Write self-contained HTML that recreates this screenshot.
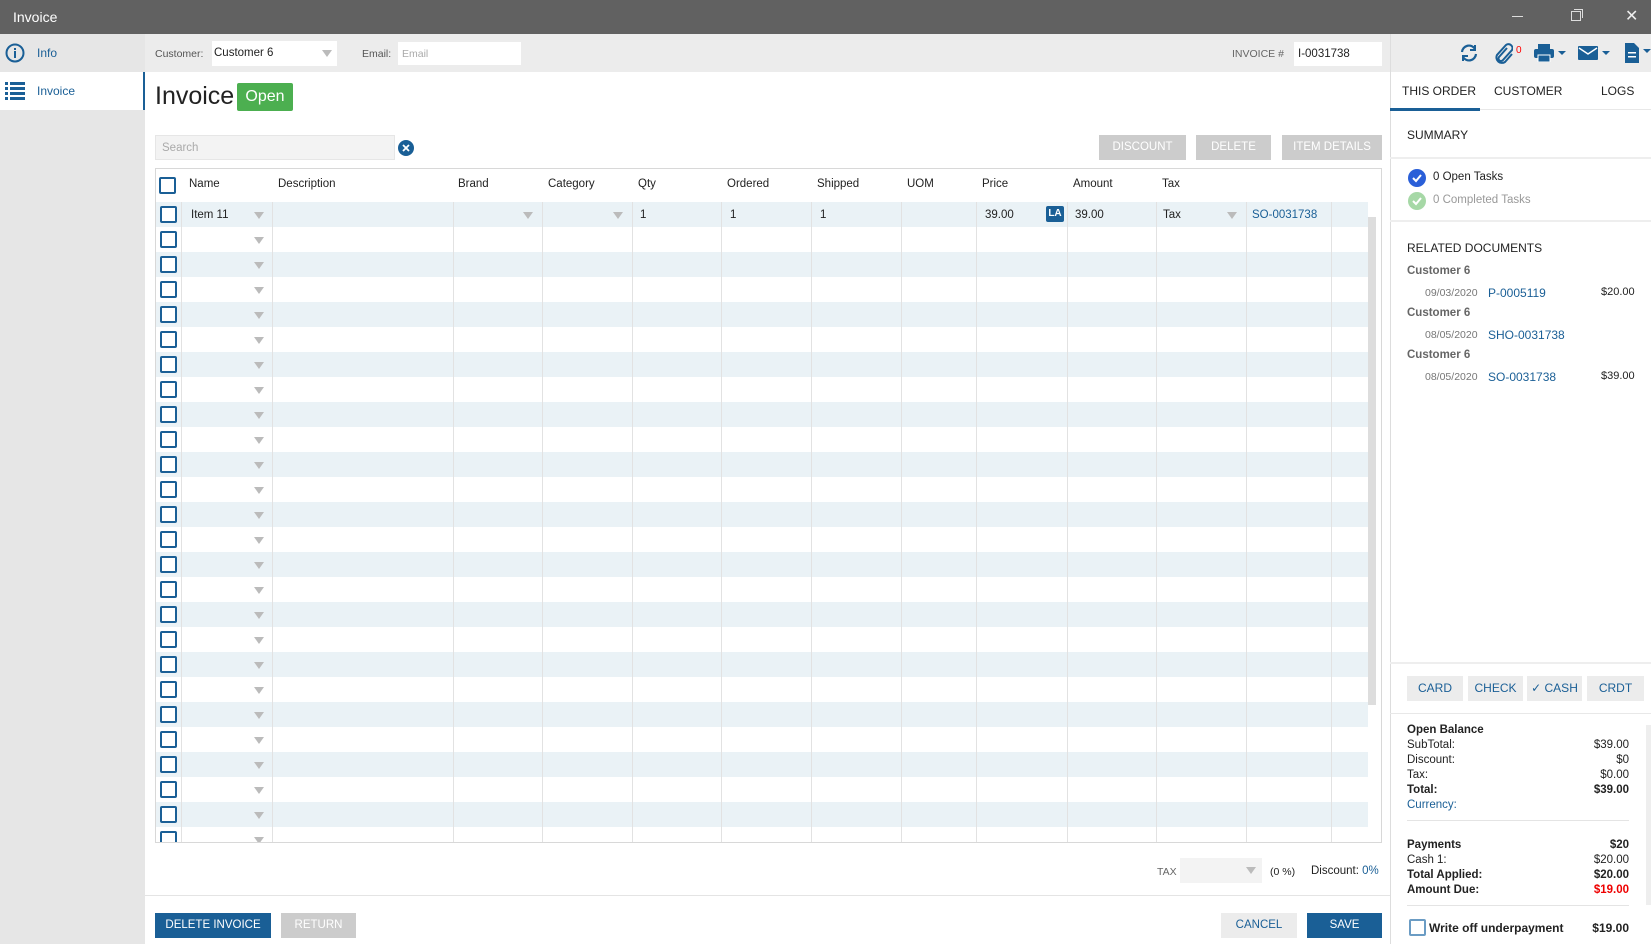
<!DOCTYPE html>
<html><head><meta charset="utf-8"><style>
*{box-sizing:border-box;margin:0;padding:0}
body{width:1651px;height:944px;overflow:hidden;font-family:"Liberation Sans",sans-serif;font-size:11.5px;color:#222;background:#fff;position:relative}
.a{position:absolute}
.blue{color:#1a5f96}
.cb{position:absolute;width:17px;height:17px;border:2px solid #1a5f96;border-radius:2px;background:#fff}
.arr{position:absolute;width:0;height:0;border-left:5px solid transparent;border-right:5px solid transparent;border-top:7px solid #bbb}
.gbtn{position:absolute;background:#ccc;color:#fff;font-size:11.5px;text-align:center;line-height:25px}
.pbtn{position:absolute;top:676px;height:25px;background:#ececec;color:#1a5f96;text-align:center;line-height:25px;font-size:12px}
.r{position:absolute;left:1407px;width:222px;font-size:11.5px;line-height:15px}
.r span{float:right}
</style></head><body>
<div class="a" style="left:0;top:0;width:1651px;height:34px;background:#616161"></div>
<div class="a" style="left:13px;top:9px;color:#fff;font-size:14px">Invoice</div>
<div class="a" style="left:1512px;top:16px;width:11px;height:1px;background:#ddd"></div>
<div class="a" style="left:1571px;top:11px;width:10px;height:10px;border:1px solid #ddd"></div>
<div class="a" style="left:1574px;top:9px;width:9px;height:9px;border-top:1px solid #ddd;border-right:1px solid #ddd"></div>
<div class="a" style="left:1625px;top:6px;color:#eee;font-size:16px">✕</div>
<div class="a" style="left:0;top:34px;width:1651px;height:38px;background:#ececec"></div>
<div class="a" style="left:0;top:34px;width:145px;height:910px;background:#e6e6e6"></div>
<div class="a" style="left:0;top:72px;width:145px;height:38px;background:#fff;border-right:2px solid #1a5f96"></div>
<svg class="a" style="left:5px;top:43px" width="20" height="20"><circle cx="10" cy="10" r="8.5" fill="none" stroke="#1a5f96" stroke-width="2"/><rect x="9" y="8" width="2" height="7" fill="#1a5f96"/><rect x="9" y="5" width="2" height="2" fill="#1a5f96"/></svg>
<div class="a blue" style="left:37px;top:46px;font-size:12px">Info</div>
<svg class="a" style="left:5px;top:82px" width="20" height="18" fill="#1a5f96"><rect x="0" y="0" width="3" height="3"/><rect x="5" y="0" width="15" height="3"/><rect x="0" y="5" width="3" height="3"/><rect x="5" y="5" width="15" height="3"/><rect x="0" y="10" width="3" height="3"/><rect x="5" y="10" width="15" height="3"/><rect x="0" y="15" width="3" height="3"/><rect x="5" y="15" width="15" height="3"/></svg>
<div class="a blue" style="left:37px;top:84px;font-size:12px">Invoice</div>
<div class="a" style="left:155px;top:48px;color:#555;font-size:10.5px">Customer:</div>
<div class="a" style="left:212px;top:41px;width:125px;height:25px;background:#fff;padding:6px 2px;font-size:11.5px">Customer 6</div>
<div class="arr" style="left:322px;top:50px"></div>
<div class="a" style="left:362px;top:48px;color:#555;font-size:10.5px">Email:</div>
<div class="a" style="left:398px;top:42px;width:123px;height:23px;background:#fff;padding:6px 4px;color:#aaa;font-size:10.5px">Email</div>
<div class="a" style="left:1232px;top:48px;color:#666;font-size:10.5px">INVOICE #</div>
<div class="a" style="left:1294px;top:42px;width:88px;height:24px;background:#fff;padding:6px 4px;font-size:11.5px">I-0031738</div>
<div class="a" style="left:1390px;top:34px;width:1px;height:910px;background:#ddd"></div>
<svg class="a" style="left:1458px;top:43px" width="22" height="20" fill="none" stroke="#1a5f96" stroke-width="2.2"><path d="M4 9a7 7 0 0 1 13-3M18 11a7 7 0 0 1-13 3"/><path d="M17 2v5h-5M5 18v-5h5" stroke-width="2"/></svg>
<svg class="a" style="left:1493px;top:42px" width="20" height="22" fill="none" stroke="#1a5f96" stroke-width="2"><path d="M14 6l-8 9a2.5 2.5 0 0 0 4 3l9-10a4 4 0 0 0-6-5l-9 10a5.5 5.5 0 0 0 8 7l7-8"/></svg>
<div class="a" style="left:1516px;top:45px;color:red;font-size:10px">0</div>
<svg class="a" style="left:1534px;top:44px" width="34" height="18" fill="#1a5f96"><rect x="4" y="0" width="12" height="5"/><rect x="0" y="5" width="20" height="9" rx="2"/><rect x="4" y="11" width="12" height="7" fill="#1a5f96" stroke="#fff" stroke-width="1"/><path d="M24 7h8l-4 4z"/></svg>
<svg class="a" style="left:1578px;top:45px" width="34" height="16" fill="#1a5f96"><rect x="0" y="1" width="20" height="14" rx="1"/><path d="M1 3l9 6 9-6" stroke="#fff" stroke-width="1.5" fill="none"/><path d="M24 6h8l-4 4z"/></svg>
<svg class="a" style="left:1625px;top:43px" width="26" height="20" fill="#1a5f96"><path d="M0 0h9l5 5v15h-14z"/><rect x="3" y="9" width="8" height="1.5" fill="#fff"/><rect x="3" y="13" width="8" height="1.5" fill="#fff"/><path d="M18 6h8l-4 4z"/></svg>
<div class="a" style="left:1402px;top:84px;font-size:12px;color:#222">THIS ORDER</div>
<div class="a" style="left:1494px;top:84px;font-size:12px;color:#222">CUSTOMER</div>
<div class="a" style="left:1601px;top:84px;font-size:12px;color:#222">LOGS</div>
<div class="a" style="left:1390px;top:109px;width:261px;height:1px;background:#e8e8e8"></div>
<div class="a" style="left:1390px;top:108px;width:90px;height:3px;background:#1a5f96"></div>
<div class="a" style="left:1407px;top:128px;font-size:12px">SUMMARY</div>
<div class="a" style="left:1390px;top:157px;width:261px;height:2px;background:#eee"></div>
<svg class="a" style="left:1408px;top:169px" width="18" height="18"><circle cx="9" cy="9" r="9" fill="#2a5fd8"/><path d="M5 9l3 3 5-6" stroke="#fff" stroke-width="2" fill="none"/></svg>
<div class="a" style="left:1433px;top:171px;font-size:11.5px">0 Open Tasks</div>
<svg class="a" style="left:1408px;top:192px" width="18" height="18"><circle cx="9" cy="9" r="9" fill="#a6d8a6"/><path d="M5 9l3 3 5-6" stroke="#fff" stroke-width="2" fill="none"/></svg>
<div class="a" style="left:1433px;top:194px;font-size:11.5px;color:#999">0 Completed Tasks</div>
<div class="a" style="left:1390px;top:220px;width:261px;height:2px;background:#eee"></div>
<div class="a" style="left:1407px;top:241px;font-size:12px">RELATED DOCUMENTS</div>
<div class="a" style="left:1407px;top:265px;font-size:11.5px;font-weight:bold;color:#666">Customer 6</div>
<div class="a" style="left:1425px;top:287px;font-size:10.5px;color:#777">09/03/2020</div>
<div class="a blue" style="left:1488px;top:286px;font-size:12px">P-0005119</div>
<div class="a" style="left:1601px;top:286px;font-size:11px">$20.00</div>
<div class="a" style="left:1407px;top:307px;font-size:11.5px;font-weight:bold;color:#666">Customer 6</div>
<div class="a" style="left:1425px;top:329px;font-size:10.5px;color:#777">08/05/2020</div>
<div class="a blue" style="left:1488px;top:328px;font-size:12px">SHO-0031738</div>
<div class="a" style="left:1407px;top:349px;font-size:11.5px;font-weight:bold;color:#666">Customer 6</div>
<div class="a" style="left:1425px;top:371px;font-size:10.5px;color:#777">08/05/2020</div>
<div class="a blue" style="left:1488px;top:370px;font-size:12px">SO-0031738</div>
<div class="a" style="left:1601px;top:370px;font-size:11px">$39.00</div>
<div class="a" style="left:1390px;top:662px;width:261px;height:2px;background:#eee"></div>
<div class="pbtn" style="left:1407px;width:56px">CARD</div>
<div class="pbtn" style="left:1468px;width:55px">CHECK</div>
<div class="pbtn" style="left:1527px;width:55px">✓ CASH</div>
<div class="pbtn" style="left:1587px;width:57px">CRDT</div>
<div class="a" style="left:1390px;top:713px;width:261px;height:1px;background:#e8e8e8"></div>
<div class="r" style="top:723px;font-weight:bold">Open Balance</div>
<div class="r" style="top:738px">SubTotal:<span>$39.00</span></div>
<div class="r" style="top:753px">Discount:<span>$0</span></div>
<div class="r" style="top:768px">Tax:<span>$0.00</span></div>
<div class="r" style="top:783px;font-weight:bold">Total:<span>$39.00</span></div>
<div class="r blue" style="top:798px">Currency:</div>
<div class="a" style="left:1407px;top:820px;width:222px;height:1px;background:#e4e4e4"></div>
<div class="r" style="top:838px;font-weight:bold">Payments<span>$20</span></div>
<div class="r" style="top:853px">Cash 1:<span>$20.00</span></div>
<div class="r" style="top:868px;font-weight:bold">Total Applied:<span>$20.00</span></div>
<div class="r" style="top:883px;font-weight:bold">Amount Due:<span style="color:#e00">$19.00</span></div>
<div class="a" style="left:1407px;top:905px;width:222px;height:1px;background:#e4e4e4"></div>
<div class="a" style="left:1409px;top:919px;width:17px;height:17px;border:2px solid #6b9cc4;border-radius:2px"></div>
<div class="r" style="top:921px;font-weight:bold;font-size:12px"><b style="margin-left:22px">Write off underpayment</b><span>$19.00</span></div>
<div class="a" style="left:1646px;top:725px;width:5px;height:180px;background:#eee"></div>
<div class="a" style="left:155px;top:82px;font-size:25px;color:#222">Invoice</div>
<div class="a" style="left:237px;top:83px;width:56px;height:28px;background:#4caf50;border-radius:2px;color:#fff;font-size:16px;text-align:center;line-height:28px">Open</div>
<div class="a" style="left:155px;top:135px;width:240px;height:25px;background:#f3f3f3;border:1px solid #e6e6e6;color:#aaa;padding:6px 6px;font-size:11.5px">Search</div>
<svg class="a" style="left:398px;top:140px" width="16" height="16"><circle cx="8" cy="8" r="8" fill="#1a5f96"/><path d="M5 5l6 6M11 5l-6 6" stroke="#fff" stroke-width="1.8"/></svg>
<div class="gbtn" style="left:1099px;top:135px;width:87px">DISCOUNT</div>
<div class="gbtn" style="left:1196px;top:135px;width:75px">DELETE</div>
<div class="gbtn" style="left:1282px;top:135px;width:100px">ITEM DETAILS</div>
<div class="a" style="left:155px;top:168px;width:1227px;height:675px;border:1px solid #d8d8d8;overflow:hidden">
 <div class="a" style="left:0;top:33px;width:1212px;height:650px;background:repeating-linear-gradient(#eaf2f6 0 25px,#fff 25px 50px)"></div>
 <div class="a" style="left:25px;top:33px;width:1px;height:650px;background:#e2e2e2"></div>
 <div class="a" style="left:116px;top:33px;width:1px;height:650px;background:#e2e2e2"></div>
 <div class="a" style="left:297px;top:33px;width:1px;height:650px;background:#e2e2e2"></div>
 <div class="a" style="left:386px;top:33px;width:1px;height:650px;background:#e2e2e2"></div>
 <div class="a" style="left:476px;top:33px;width:1px;height:650px;background:#e2e2e2"></div>
 <div class="a" style="left:565px;top:33px;width:1px;height:650px;background:#e2e2e2"></div>
 <div class="a" style="left:655px;top:33px;width:1px;height:650px;background:#e2e2e2"></div>
 <div class="a" style="left:745px;top:33px;width:1px;height:650px;background:#e2e2e2"></div>
 <div class="a" style="left:820px;top:33px;width:1px;height:650px;background:#e2e2e2"></div>
 <div class="a" style="left:911px;top:33px;width:1px;height:650px;background:#e2e2e2"></div>
 <div class="a" style="left:1000px;top:33px;width:1px;height:650px;background:#e2e2e2"></div>
 <div class="a" style="left:1090px;top:33px;width:1px;height:650px;background:#e2e2e2"></div>
 <div class="a" style="left:1175px;top:33px;width:1px;height:650px;background:#e2e2e2"></div>
 <div class="a" style="left:1212px;top:48px;width:8px;height:488px;background:#ddd"></div>
 <div class="cb" style="left:3px;top:8px"></div>
 <div class="a" style="left:33px;top:9px">Name</div>
 <div class="a" style="left:122px;top:9px">Description</div>
 <div class="a" style="left:302px;top:9px">Brand</div>
 <div class="a" style="left:392px;top:9px">Category</div>
 <div class="a" style="left:482px;top:9px">Qty</div>
 <div class="a" style="left:571px;top:9px">Ordered</div>
 <div class="a" style="left:661px;top:9px">Shipped</div>
 <div class="a" style="left:751px;top:9px">UOM</div>
 <div class="a" style="left:826px;top:9px">Price</div>
 <div class="a" style="left:917px;top:9px">Amount</div>
 <div class="a" style="left:1006px;top:9px">Tax</div>
 <div class="a" style="left:35px;top:40px">Item 11</div>
 <div class="arr" style="left:367px;top:43px"></div>
 <div class="arr" style="left:457px;top:43px"></div>
 <div class="a" style="left:484px;top:40px">1</div>
 <div class="a" style="left:574px;top:40px">1</div>
 <div class="a" style="left:664px;top:40px">1</div>
 <div class="a" style="left:829px;top:40px">39.00</div>
 <div class="a" style="left:890px;top:37px;width:18px;height:16px;background:#1a5f96;color:#fff;border-radius:2px;font-size:10px;font-weight:bold;text-align:center;line-height:16px">LA</div>
 <div class="a" style="left:919px;top:40px">39.00</div>
 <div class="a" style="left:1007px;top:40px">Tax</div>
 <div class="arr" style="left:1071px;top:43px"></div>
 <div class="a blue" style="left:1096px;top:40px">SO-0031738</div>
 <div id="rows"></div>
</div>
<script>
var h='';for(var i=0;i<26;i++){var t=33+i*25;h+='<div class="cb" style="left:4px;top:'+(t+4)+'px"></div><div class="arr" style="left:98px;top:'+(t+10)+'px"></div>';}
document.getElementById('rows').innerHTML=h;
</script>
<div class="a" style="left:1157px;top:866px;color:#666;font-size:10.5px">TAX</div>
<div class="a" style="left:1180px;top:858px;width:82px;height:25px;background:#f3f3f3"></div>
<div class="arr" style="left:1246px;top:867px"></div>
<div class="a" style="left:1270px;top:866px;font-size:10.5px">(0 %)</div>
<div class="a" style="left:1311px;top:865px;font-size:11.5px">Discount: <span class="blue">0%</span></div>
<div class="a" style="left:145px;top:895px;width:1245px;height:1px;background:#e4e4e4"></div>
<div class="a" style="left:155px;top:913px;width:116px;height:25px;background:#1a5f96;color:#fff;text-align:center;line-height:25px;font-size:11.5px">DELETE INVOICE</div>
<div class="a" style="left:281px;top:913px;width:75px;height:25px;background:#ccc;color:#fff;text-align:center;line-height:25px;font-size:11.5px">RETURN</div>
<div class="a" style="left:1221px;top:913px;width:76px;height:25px;background:#ececec;color:#1a5f96;text-align:center;line-height:25px;font-size:11.5px">CANCEL</div>
<div class="a" style="left:1307px;top:913px;width:75px;height:25px;background:#1a5f96;color:#fff;text-align:center;line-height:25px;font-size:11.5px">SAVE</div>
</body></html>
